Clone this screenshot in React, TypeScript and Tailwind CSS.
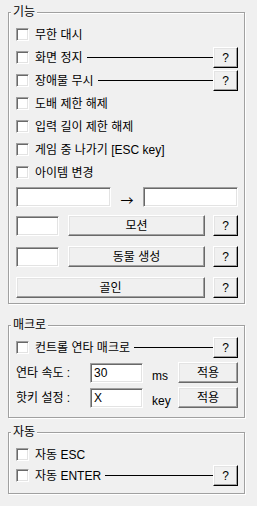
import type { ReactNode } from "react";

const sunken =
  "border border-t-[#a0a0a0] border-l-[#a0a0a0] border-r-white border-b-white bg-white shadow-[inset_1px_1px_0_#696969,inset_-1px_-1px_0_#e3e3e3]";

const raised =
  "border border-t-white border-l-white border-r-[#696969] border-b-[#696969] bg-[#f0f0f0] shadow-[inset_-1px_-1px_0_#a0a0a0,inset_1px_1px_0_#e3e3e3]";

function Group({
  title,
  className,
  children,
}: {
  title: string;
  className: string;
  children: ReactNode;
}) {
  return (
    <div
      className={`relative w-[237px] border border-[#a0a0a0] pl-[7px] pr-[6px] shadow-[inset_1px_1px_0_#fff,1px_1px_0_#fff] ${className}`}
    >
      <span className="absolute left-[2px] top-[-8px] bg-[#f0f0f0] px-[2px] leading-[14px]">
        {title}
      </span>
      {children}
    </div>
  );
}

function CheckBox() {
  return <span className={`h-[13px] w-[13px] shrink-0 ${sunken}`} />;
}

function HelpButton() {
  return (
    <button
      type="button"
      className="flex h-[21px] w-[25px] shrink-0 items-center justify-center border border-t-white border-l-white border-r-black border-b-black bg-[#f0f0f0] leading-[14px] shadow-[inset_-1px_-1px_0_#a0a0a0,inset_1px_1px_0_#e3e3e3]"
    >
      ?
    </button>
  );
}

function CheckRow({
  label,
  help,
  height = "h-[23px]",
}: {
  label: string;
  help?: boolean;
  height?: string;
}) {
  return (
    <div className={`flex items-center ${height}`}>
      <CheckBox />
      <span className="ml-[6px] whitespace-nowrap">{label}</span>
      {help && (
        <>
          <div className="ml-[4px] h-px flex-1 bg-black" />
          <HelpButton />
        </>
      )}
    </div>
  );
}

function Button({ label, width }: { label: string; width: string }) {
  return (
    <button
      type="button"
      className={`flex h-[21px] items-center justify-center leading-[14px] ${width} ${raised}`}
    >
      {label}
    </button>
  );
}

function TextBox({ width, value }: { width: string; value?: string }) {
  return (
    <div className={`h-[20px] shrink-0 pl-[3px] pt-[2px] leading-[14px] ${width} ${sunken}`}>
      {value}
    </div>
  );
}

export default function App() {
  return (
    <div className="h-[506px] w-[257px] overflow-hidden bg-[#f0f0f0] px-2 pt-3 font-['Liberation_Sans','Noto_Sans_CJK_KR',sans-serif] text-[12px] leading-[14px] text-black">
      {/* 기능 */}
      <Group title="기능" className="pt-[10px] pb-[5px]">
        <CheckRow label="무한 대시" />
        <CheckRow label="화면 정지" help />
        <CheckRow label="장애물 무시" help />
        <CheckRow label="도배 제한 해제" />
        <CheckRow label="입력 길이 제한 해제" />
        <CheckRow label="게임 중 나가기 [ESC key]" />
        <CheckRow label="아이템 변경" />

        <div className="mt-[3px] flex items-end">
          <TextBox width="w-[95px]" />
          <span className="flex w-[32px] justify-center font-['Noto_Sans_CJK_KR',sans-serif] text-[13px]">
            →
          </span>
          <TextBox width="w-[95px]" />
        </div>

        <div className="mt-[8px] flex items-center">
          <TextBox width="w-[43px]" />
          <div className="ml-[9px]">
            <Button label="모션" width="w-[137px]" />
          </div>
          <div className="ml-[8px]">
            <HelpButton />
          </div>
        </div>

        <div className="mt-[10px] flex items-center">
          <TextBox width="w-[43px]" />
          <div className="ml-[9px]">
            <Button label="동물 생성" width="w-[137px]" />
          </div>
          <div className="ml-[8px]">
            <HelpButton />
          </div>
        </div>

        <div className="mt-[10px] flex items-center">
          <Button label="골인" width="w-[189px]" />
          <div className="ml-[8px]">
            <HelpButton />
          </div>
        </div>
      </Group>

      {/* 매크로 */}
      <Group title="매크로" className="mt-[21px] pt-[10px] pb-[9px]">
        <CheckRow label="컨트롤 연타 매크로" help />

        <div className="mt-[3px] flex h-[21px] items-stretch">
          <span className="flex w-[74px] items-center whitespace-nowrap">연타 속도 :</span>
          <div className="flex items-end">
            <TextBox width="w-[53px]" value="30" />
          </div>
          <span className="flex w-[35px] items-end pl-[9px]">ms</span>
          <Button label="적용" width="w-[60px]" />
        </div>

        <div className="mt-[4px] flex h-[21px] items-stretch">
          <span className="flex w-[74px] items-center whitespace-nowrap">핫키 설정 :</span>
          <div className="flex items-end">
            <TextBox width="w-[53px]" value="X" />
          </div>
          <span className="flex w-[35px] items-end pl-[9px]">key</span>
          <Button label="적용" width="w-[60px]" />
        </div>
      </Group>

      {/* 자동 */}
      <Group title="자동" className="mt-[14px] pt-[11px] pb-[7px]">
        <CheckRow label="자동 ESC" height="h-[21px]" />
        <CheckRow label="자동 ENTER" help height="h-[21px]" />
      </Group>
    </div>
  );
}
